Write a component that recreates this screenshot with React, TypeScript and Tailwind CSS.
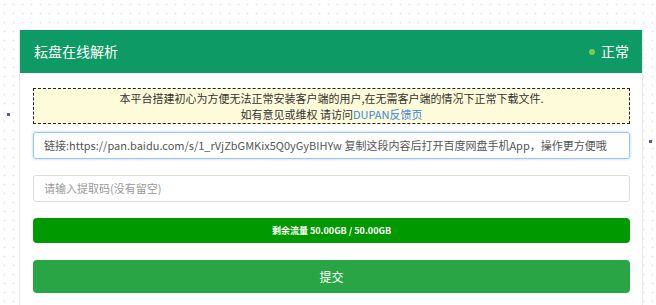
import React from "react";

export default function App() {
  const font = { fontFamily: '"Noto Sans CJK SC", "Noto Sans", sans-serif' };
  return (
    <div
      className="relative w-[656px] h-[305px] overflow-hidden bg-white bg-[radial-gradient(circle,#e6e6e6_0.8px,transparent_1.2px)] bg-[size:9px_9px] pt-[30px] pl-[19px] pr-[13px]"
      style={font}
    >
      <div className="absolute left-[7px] top-[113px] w-[3px] h-[3px] bg-[#5b4fc4]" />
      <div className="absolute left-[649px] top-[140px] w-[3px] h-[3px] bg-[#5b4fc4]" />
      <div className="bg-white border-x border-[#e8e8e8] h-[300px]">
        <div className="h-[43px] bg-[#0e9a65] flex items-center justify-between pl-[14px] pr-[13px] text-white text-[14px]">
          <span>耘盘在线解析</span>
          <span className="flex items-center gap-[6px]">
            <span className="w-[6px] h-[6px] rounded-full bg-[#7acb4c]" />
            <span>正常</span>
          </span>
        </div>
        <div className="pl-[13px] pr-[12px] pt-[15px] flex flex-col">
          <div className="h-[36px] border border-dashed border-[#222] bg-[#fdfbd9] flex flex-col items-center justify-center text-[11px] leading-[16px] text-[#333]">
            <div>本平台搭建初心为方便无法正常安装客户端的用户,在无需客户端的情况下正常下载文件.</div>
            <div>
              如有意见或维权 请访问<span className="text-[#3a87e0]">DUPAN反馈页</span>
            </div>
          </div>
          <div className="mt-[8px] h-[27px] border border-[#9cc7f0] rounded-[3px] shadow-[0_0_2px_1px_rgba(128,189,255,0.35)] flex items-center pl-[10px] text-[11px] text-[#555] whitespace-nowrap overflow-hidden">
            链接:https://pan.baidu.com/s/1_rVjZbGMKix5Q0yGyBIHYw 复制这段内容后打开百度网盘手机App，操作更方便哦
          </div>
          <div className="mt-[16px] h-[27px] border border-[#dcdcdc] rounded-[3px] flex items-center pl-[10px] text-[11px] text-[#999]">
            请输入提取码(没有留空)
          </div>
          <div className="mt-[16px] h-[25px] rounded-[4px] bg-[#009900] flex items-center justify-center text-white text-[9px] font-semibold">
            剩余流量 50.00GB / 50.00GB
          </div>
          <div className="mt-[17px] h-[33px] rounded-[4px] bg-[#29a546] flex items-center justify-center text-white text-[12px]">
            提交
          </div>
        </div>
      </div>
    </div>
  );
}
